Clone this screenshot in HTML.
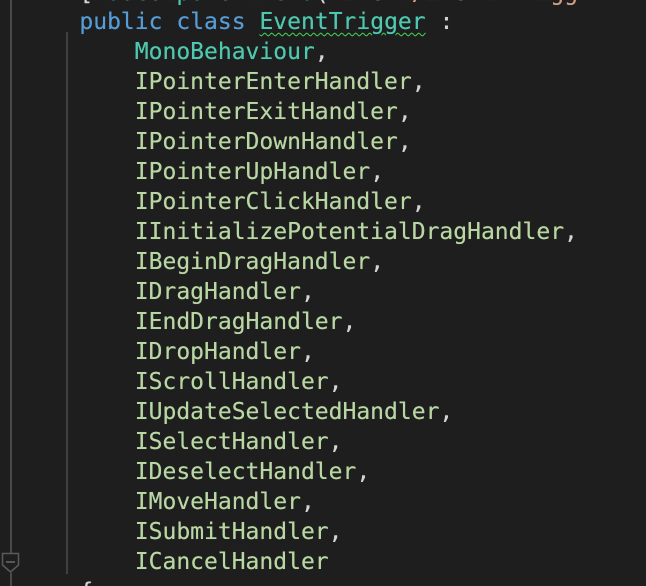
<!DOCTYPE html>
<html><head><style>
html,body{margin:0;padding:0;background:#1e1e1e;width:646px;height:586px;overflow:hidden;position:relative}
.l{position:absolute;left:24px;height:30px;line-height:30px;font-family:"DejaVu Sans Mono","Liberation Mono",monospace;font-size:23px;white-space:pre;color:#d4d4d4;text-shadow:0 0 0.4px currentColor}
.k{color:#569cd6}.t{color:#4ec9b0}.i{color:#b8d7a3}.s{color:#d69d85}
.sq{text-decoration:underline wavy #3fbf3f;text-decoration-thickness:1px;text-underline-offset:3px}
</style></head><body>
<div style="position:absolute;left:10px;top:0;width:2px;height:553px;background:#4a4a4a"></div>
<div style="position:absolute;left:10px;top:573px;width:2px;height:13px;background:#4a4a4a"></div>
<svg style="position:absolute;left:0;top:551px" width="22" height="24"><path d="M2.5 2.5H18.5V14L10.5 21L2.5 14Z" fill="none" stroke="#5a5a5a" stroke-width="1.5"/><path d="M6 11H15" stroke="#6a6a6a" stroke-width="1.5"/></svg>
<div style="position:absolute;left:66px;top:32px;width:2px;height:542px;background:#404040"></div>
<div class="l" style="top:-22px">    [<span class="t">AddComponentMenu</span>(<span class="s">"Event/Event Trigg"</span></div>
<div class="l" style="top:7px">    <span class="k">public</span> <span class="k">class</span> <span class="t sq">EventTrigger</span> :</div>
<div class="l" style="top:37px">        <span class="t">MonoBehaviour</span>,</div>
<div class="l" style="top:67px">        <span class="i">IPointerEnterHandler</span>,</div>
<div class="l" style="top:97px">        <span class="i">IPointerExitHandler</span>,</div>
<div class="l" style="top:127px">        <span class="i">IPointerDownHandler</span>,</div>
<div class="l" style="top:157px">        <span class="i">IPointerUpHandler</span>,</div>
<div class="l" style="top:187px">        <span class="i">IPointerClickHandler</span>,</div>
<div class="l" style="top:217px">        <span class="i">IInitializePotentialDragHandler</span>,</div>
<div class="l" style="top:247px">        <span class="i">IBeginDragHandler</span>,</div>
<div class="l" style="top:277px">        <span class="i">IDragHandler</span>,</div>
<div class="l" style="top:307px">        <span class="i">IEndDragHandler</span>,</div>
<div class="l" style="top:337px">        <span class="i">IDropHandler</span>,</div>
<div class="l" style="top:367px">        <span class="i">IScrollHandler</span>,</div>
<div class="l" style="top:397px">        <span class="i">IUpdateSelectedHandler</span>,</div>
<div class="l" style="top:427px">        <span class="i">ISelectHandler</span>,</div>
<div class="l" style="top:457px">        <span class="i">IDeselectHandler</span>,</div>
<div class="l" style="top:487px">        <span class="i">IMoveHandler</span>,</div>
<div class="l" style="top:517px">        <span class="i">ISubmitHandler</span>,</div>
<div class="l" style="top:547px">        <span class="i">ICancelHandler</span></div>
<div class="l" style="top:577px">    {</div>
</body></html>
